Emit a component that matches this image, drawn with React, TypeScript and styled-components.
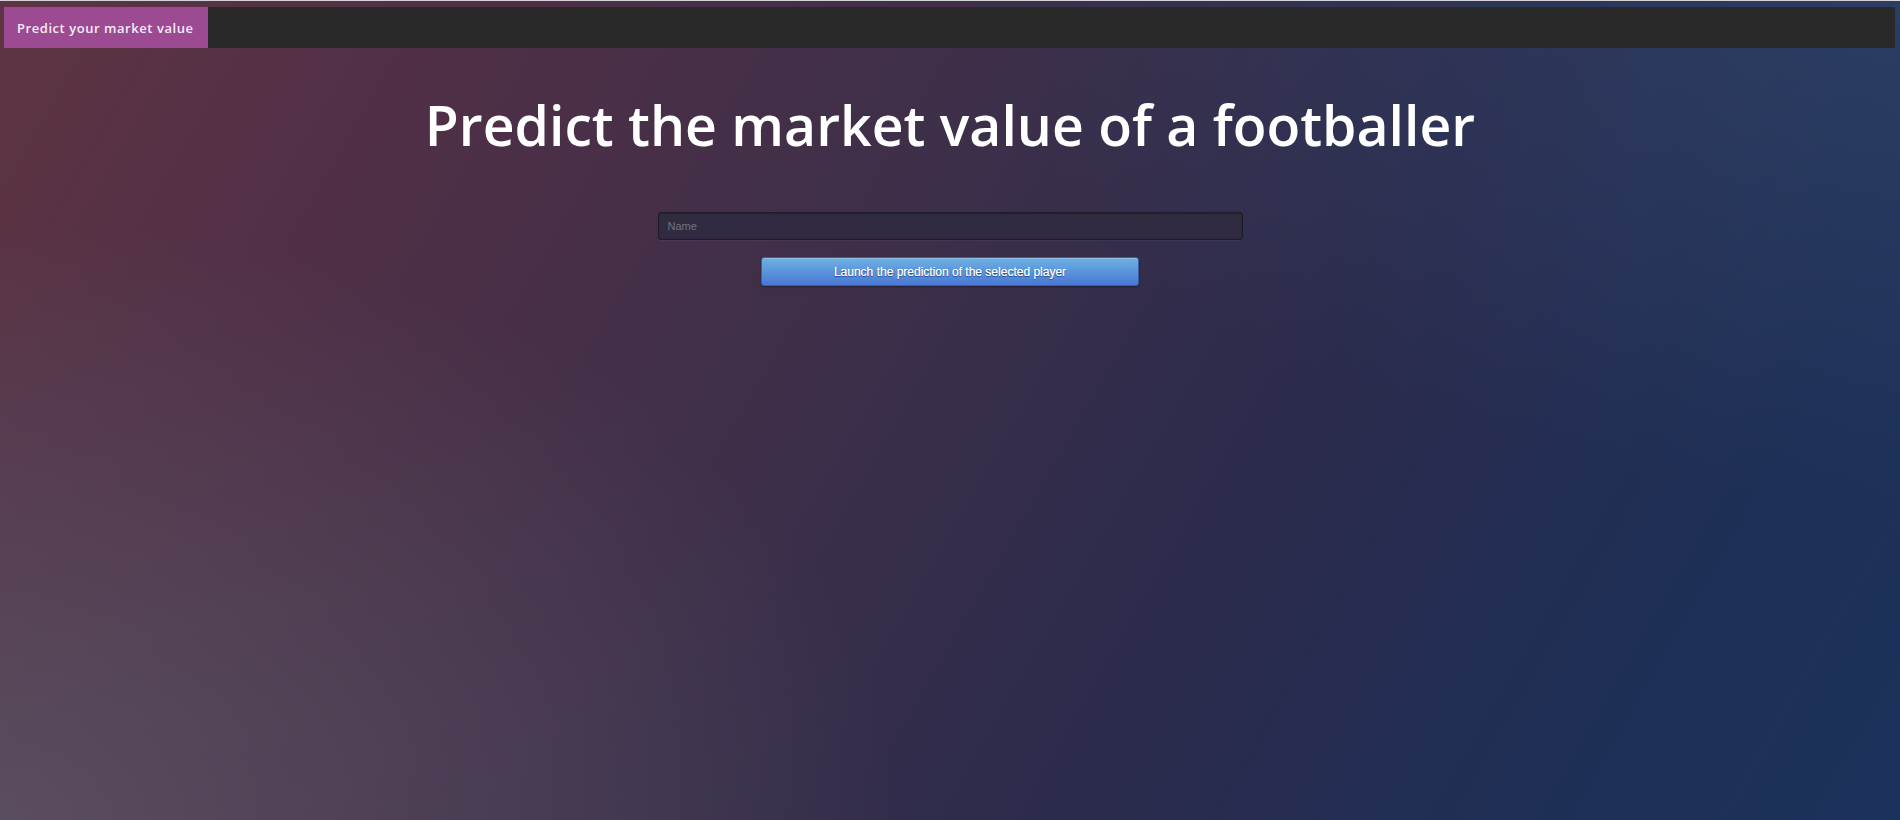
import React from "react";
import styled, { createGlobalStyle } from "styled-components";

const Global = createGlobalStyle`
  html, body { margin: 0; padding: 0; }
  body {
    width: 1900px;
    height: 820px;
    overflow: hidden;
    border-top: 1px solid #d4d4d8;
    box-sizing: border-box;
    font-family: "Open Sans", "Liberation Sans", sans-serif;
    background:
      radial-gradient(ellipse 900px 600px at 0% 100%, rgba(92, 88, 104, 0.75) 0%, rgba(92, 88, 104, 0) 100%),
      radial-gradient(ellipse 900px 500px at 100% 0%, rgba(50, 72, 110, 0.6) 0%, rgba(50, 72, 110, 0) 100%),
      linear-gradient(120deg, #5e3444 0%, #4e2f46 22%, #3c2f4a 45%, #2b2b4c 65%, #1e2f56 85%, #1b325c 100%);
  }
`;

const Page = styled.div`
  display: flex;
  flex-direction: column;
  padding-top: 6px;
`;

const NavBar = styled.nav`
  display: flex;
  align-items: stretch;
  height: 41px;
  margin: 0 5px 0 4px;
  background: #292929;
`;

const NavTab = styled.div`
  display: flex;
  align-items: center;
  padding: 0 0 0 13px;
  width: 204px;
  box-sizing: border-box;
  background: #9c4a92;
  color: #f4eef6;
  font-family: "Open Sans", sans-serif;
  font-size: 13px;
  font-weight: 600;
  letter-spacing: 0.55px;
  white-space: nowrap;
`;

const Title = styled.h1`
  margin: 49px 0 0;
  text-align: center;
  color: #ffffff;
  font-family: "Open Sans", sans-serif;
  font-size: 55.3px;
  font-weight: 600;
  line-height: 55px;
`;

const FormArea = styled.div`
  display: flex;
  flex-direction: column;
  align-items: center;
  margin-top: 60px;
`;

const NameInput = styled.input`
  width: 585px;
  height: 28px;
  box-sizing: border-box;
  padding: 0 9px;
  border: 1px solid #1f1b29;
  border-radius: 3px;
  background: #302b40;
  box-shadow: inset 0 1px 2px rgba(0, 0, 0, 0.25), 0 1px 0 rgba(255, 255, 255, 0.04);
  color: #ddd;
  font-family: "Liberation Sans", Arial, sans-serif;
  font-size: 11px;
  outline: none;
  &::placeholder { color: #75717e; }
`;

const LaunchButton = styled.button`
  margin-top: 17px;
  width: 378px;
  height: 29px;
  box-sizing: border-box;
  border: 1px solid #3b5ea6;
  border-radius: 3px;
  background: linear-gradient(to bottom, #6fb1e2 0%, #5a95dc 50%, #4a77d5 100%);
  box-shadow: 0 1px 2px rgba(0, 0, 0, 0.35), inset 0 1px 0 rgba(255, 255, 255, 0.2);
  color: #ffffff;
  font-family: "Liberation Sans", Arial, sans-serif;
  font-size: 12px;
  text-shadow: 0 1px 1px rgba(20, 40, 90, 0.7), 0 0 0.4px #fff;
  cursor: pointer;
  padding: 0;
`;

export default function App() {
  return (
    <>
      <Global />
      <Page>
        <NavBar>
          <NavTab>Predict your market value</NavTab>
        </NavBar>
        <Title>Predict the market value of a footballer</Title>
        <FormArea>
          <NameInput placeholder="Name" />
          <LaunchButton>Launch the prediction of the selected player</LaunchButton>
        </FormArea>
      </Page>
    </>
  );
}
